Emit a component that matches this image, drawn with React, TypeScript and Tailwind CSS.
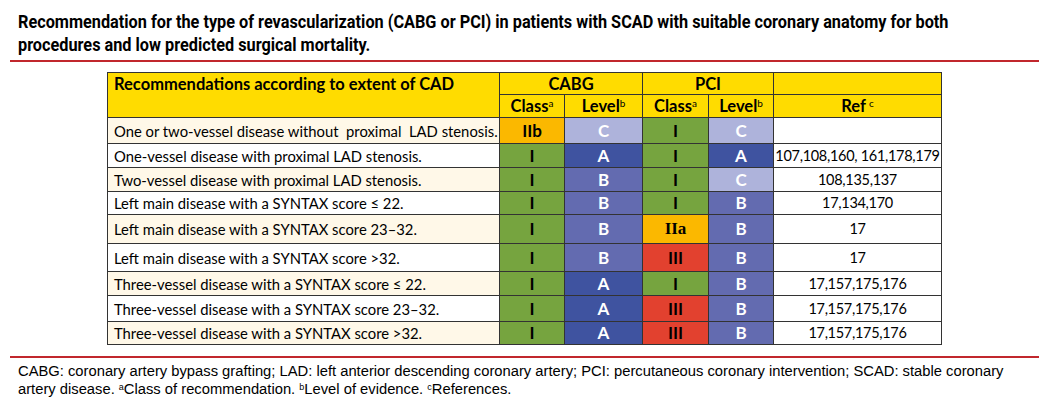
import React from "react";

type Cell = { t: string; bg: string; fg: string; serif?: boolean };

const GREEN = "bg-[#76a43f]";
const ORANGE = "bg-[#fbb800]";
const RED = "bg-[#e2412f]";
const DARK = "bg-[#3f53a0]";
const MID = "bg-[#636bb0]";
const LIGHT = "bg-[#aeb3db]";

const I: Cell = { t: "I", bg: GREEN, fg: "text-black" };
const III: Cell = { t: "III", bg: RED, fg: "text-black" };
const A: Cell = { t: "A", bg: DARK, fg: "text-white" };
const B: Cell = { t: "B", bg: MID, fg: "text-white" };
const C: Cell = { t: "C", bg: LIGHT, fg: "text-white" };

const rows: { label: string; cells: Cell[]; ref: string; h: string; cream: boolean }[] = [
  {
    label: "One or two-vessel disease without  proximal  LAD stenosis.",
    cells: [{ t: "IIb", bg: ORANGE, fg: "text-black" }, C, I, C],
    ref: "",
    h: "h-[26px]",
    cream: true,
  },
  { label: "One-vessel disease with proximal LAD stenosis.", cells: [I, A, I, A], ref: "107,108,160, 161,178,179", h: "h-[24px]", cream: false },
  { label: "Two-vessel disease with proximal LAD stenosis.", cells: [I, B, I, C], ref: "108,135,137", h: "h-[24px]", cream: true },
  { label: "Left main disease with a SYNTAX score ≤ 22.", cells: [I, B, I, B], ref: "17,134,170", h: "h-[23px]", cream: false },
  {
    label: "Left main disease with a SYNTAX score 23–32.",
    cells: [I, B, { t: "IIa", bg: ORANGE, fg: "text-black", serif: true }, B],
    ref: "17",
    h: "h-[29px]",
    cream: true,
  },
  { label: "Left main disease with a SYNTAX score >32.", cells: [I, B, III, B], ref: "17", h: "h-[28px]", cream: false },
  { label: "Three-vessel disease with a SYNTAX score ≤ 22.", cells: [I, A, I, B], ref: "17,157,175,176", h: "h-[24px]", cream: true },
  { label: "Three-vessel disease with a SYNTAX score 23–32.", cells: [I, A, III, B], ref: "17,157,175,176", h: "h-[26px]", cream: false },
  { label: "Three-vessel disease with a SYNTAX score >32.", cells: [I, A, III, B], ref: "17,157,175,176", h: "h-[23px]", cream: true },
];

const bd = "border border-[#333] p-0";

export default function App() {
  return (
    <div className="w-[1049px] h-[403px] bg-white overflow-hidden">
      <div className="h-[60px] pt-[10px] pl-[18px] overflow-hidden">
        <div className="origin-left scale-x-[0.856] whitespace-nowrap font-['Roboto',sans-serif] font-bold text-[19px] leading-[23px] text-black">
          Recommendation for the type of revascularization (CABG or PCI) in patients with SCAD with suitable coronary anatomy for both
          <br />
          procedures and low predicted surgical mortality.
        </div>
      </div>
      <div className="mx-[10px] h-[2px] bg-[#c1272d]" />
      <div className="pl-[107px] pt-[10px] h-[294px]">
        <table className="border-collapse border border-[#222] font-['Lato',sans-serif] text-black table-fixed w-[834px]">
          <colgroup>
            <col className="w-[392px]" />
            <col className="w-[65px]" />
            <col className="w-[78px]" />
            <col className="w-[66px]" />
            <col className="w-[65px]" />
            <col className="w-[168px]" />
          </colgroup>
          <thead>
            <tr className="h-[22px] bg-[#ffdc00] font-bold text-[16.5px] leading-[20px]">
              <td rowSpan={2} className={`${bd} align-top px-[6px] pt-[1px] text-[16.5px] whitespace-nowrap`}>
                Recommendations according to extent of CAD
              </td>
              <td colSpan={2} className={`${bd} text-center`}>CABG</td>
              <td colSpan={2} className={`${bd} text-center`}>PCI</td>
              <td className={bd}></td>
            </tr>
            <tr className="h-[23px] bg-[#ffdc00] font-bold text-[16.5px] leading-[20px]">
              <td className={`${bd} text-center`}>
                Class<sup className="text-[10px] font-normal">a</sup>
              </td>
              <td className={`${bd} text-center`}>
                Level<sup className="text-[10px] font-normal">b</sup>
              </td>
              <td className={`${bd} text-center`}>
                Class<sup className="text-[10px] font-normal">a</sup>
              </td>
              <td className={`${bd} text-center`}>
                Level<sup className="text-[10px] font-normal">b</sup>
              </td>
              <td className={`${bd} text-center`}>
                Ref<sup className="text-[10px] font-normal ml-[3px]">c</sup>
              </td>
            </tr>
          </thead>
          <tbody>
            {rows.map((r) => (
              <tr key={r.label} className={`${r.h} leading-[18px]`}>
                <td className={`${bd} px-[6px] whitespace-pre text-[14.8px] ${r.cream ? "bg-[#fff8e8]" : "bg-white"}`}>
                  {r.label}
                </td>
                {r.cells.map((c, i) => (
                  <td
                    key={i}
                    className={`${bd} ${c.bg} ${c.fg} text-center font-bold ${
                      c.serif ? "font-['Liberation_Serif',serif] text-[17px]" : "text-[17px]"
                    }`}
                  >
                    {c.t}
                  </td>
                ))}
                <td className={`${bd} bg-white text-center text-[14.5px] tracking-[-0.3px] whitespace-nowrap`}>{r.ref}</td>
              </tr>
            ))}
          </tbody>
        </table>
      </div>
      <div className="mx-[10px] h-[2px] bg-[#c1272d]" />
      <div className="pt-[4px] pl-[18px] whitespace-nowrap font-['Liberation_Sans',sans-serif] text-[14.75px] leading-[18px] text-black">
        CABG: coronary artery bypass grafting; LAD: left anterior descending coronary artery; PCI: percutaneous coronary intervention; SCAD: stable coronary
        <br />
        artery disease. <sup className="text-[9px]">a</sup>Class of recommendation. <sup className="text-[9px]">b</sup>Level of evidence.{" "}
        <sup className="text-[9px]">c</sup>References.
      </div>
    </div>
  );
}
